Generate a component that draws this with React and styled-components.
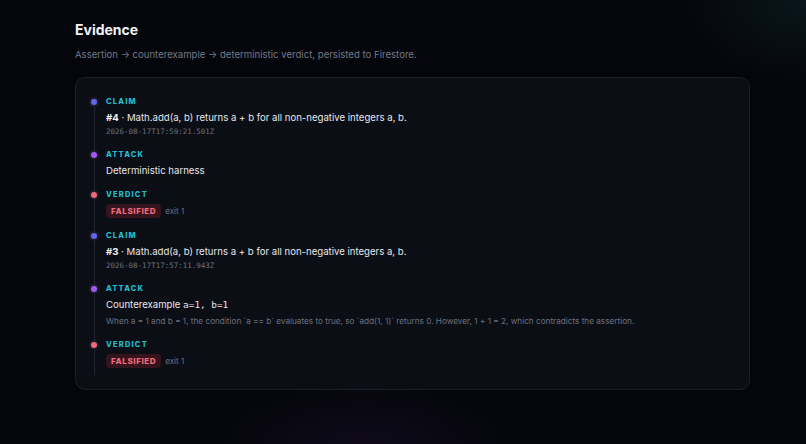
import React from "react";
import styled, { createGlobalStyle } from "styled-components";

const Global = createGlobalStyle`
  html, body { margin: 0; padding: 0; }
  body {
    background: #05060c;
    font-family: Inter, "Noto Sans", sans-serif;
    -webkit-font-smoothing: antialiased;
  }
`;

const Page = styled.div`
  min-height: 444px;
  box-sizing: border-box;
  padding: 20px 56px 40px 75px;
  background:
    radial-gradient(ellipse 180px 120px at 100% 0%, rgba(20, 70, 70, 0.25), transparent 70%),
    radial-gradient(ellipse 220px 90px at 45% 100%, rgba(60, 30, 90, 0.18), transparent 70%),
    #05060c;
`;

const Title = styled.h1`
  margin: 0;
  font-size: 14px;
  line-height: 20px;
  font-weight: 700;
  color: #f1f3f7;
`;

const Subtitle = styled.p`
  margin: 8px 0 0;
  font-size: 9.6px;
  line-height: 14px;
  color: #737987;
`;

const Card = styled.section`
  margin-top: 15px;
  background: #0c0e15;
  border: 1px solid #1d2029;
  border-radius: 10px;
  padding: 19px 20px 14px 30px;
`;

const Timeline = styled.ol`
  position: relative;
  list-style: none;
  margin: 0;
  padding: 0 0 7px 0;

  &::before {
    content: "";
    position: absolute;
    left: -12px;
    top: 5px;
    bottom: 0;
    width: 1px;
    background: #22252f;
  }
`;

const Item = styled.li`
  position: relative;
  padding-bottom: 13px;
  &:last-child { padding-bottom: 0; }
`;

const Dot = styled.span`
  position: absolute;
  left: -15px;
  top: 2px;
  width: 6px;
  height: 6px;
  border-radius: 50%;
  background: ${(p) => p.$color};
  box-shadow: 0 0 0 2px #1c1d29;
`;

const Label = styled.div`
  font-size: 7.5px;
  line-height: 10px;
  font-weight: 800;
  letter-spacing: 1.2px;
  color: #22bcd0;
  text-transform: uppercase;
`;

const Body = styled.div`
  margin-top: 4px;
  font-size: 9.6px;
  line-height: 13px;
  color: #e6e8ec;
  strong { font-weight: 700; color: #f3f4f6; }
`;

const Code = styled.code`
  font-family: "DejaVu Sans Mono", monospace;
  font-size: 9.4px;
  color: #e6e8ec;
`;

const Stamp = styled.div`
  margin-top: 3px;
  font-family: "DejaVu Sans Mono", monospace;
  font-size: 7.5px;
  line-height: 10px;
  color: #6c707c;
`;

const Note = styled.div`
  margin-top: 5px;
  font-size: 8.2px;
  line-height: 11px;
  color: #6c717d;
`;

const VerdictRow = styled.div`
  margin-top: 4px;
  display: flex;
  align-items: center;
  gap: 4px;
`;

const Badge = styled.span`
  display: inline-block;
  padding: 2px 5px;
  border-radius: 4px;
  background: #35141d;
  color: #f1697f;
  font-size: 8px;
  line-height: 10px;
  font-weight: 800;
  letter-spacing: 0.6px;
`;

const Exit = styled.span`
  font-size: 8px;
  color: #6c717d;
`;

const DOTS = {
  claim: "#6366f1",
  attack: "#a855f7",
  verdict: "#f2687d",
};

const events = [
  { kind: "claim", num: "#4", text: "Math.add(a, b) returns a + b for all non-negative integers a, b.", at: "2026-08-17T17:59:21.501Z" },
  { kind: "attack", text: "Deterministic harness" },
  { kind: "verdict", verdict: "FALSIFIED", exit: 1 },
  { kind: "claim", num: "#3", text: "Math.add(a, b) returns a + b for all non-negative integers a, b.", at: "2026-08-17T17:57:11.943Z" },
  {
    kind: "attack",
    text: "Counterexample ",
    code: "a=1, b=1",
    note: "When a = 1 and b = 1, the condition `a == b` evaluates to true, so `add(1, 1)` returns 0. However, 1 + 1 = 2, which contradicts the assertion.",
  },
  { kind: "verdict", verdict: "FALSIFIED", exit: 1 },
];

function Event({ e }) {
  return (
    <Item>
      <Dot $color={DOTS[e.kind]} />
      <Label>{e.kind}</Label>
      {e.kind === "claim" && (
        <>
          <Body>
            <strong>{e.num}</strong> · {e.text}
          </Body>
          <Stamp>{e.at}</Stamp>
        </>
      )}
      {e.kind === "attack" && (
        <>
          <Body>
            {e.text}
            {e.code && <Code>{e.code}</Code>}
          </Body>
          {e.note && <Note>{e.note}</Note>}
        </>
      )}
      {e.kind === "verdict" && (
        <VerdictRow>
          <Badge>{e.verdict}</Badge>
          <Exit>exit {e.exit}</Exit>
        </VerdictRow>
      )}
    </Item>
  );
}

export default function App() {
  return (
    <>
      <Global />
      <Page>
        <Title>Evidence</Title>
        <Subtitle>Assertion → counterexample → deterministic verdict, persisted to Firestore.</Subtitle>
        <Card>
          <Timeline>
            {events.map((e, i) => (
              <Event key={i} e={e} />
            ))}
          </Timeline>
        </Card>
      </Page>
    </>
  );
}
